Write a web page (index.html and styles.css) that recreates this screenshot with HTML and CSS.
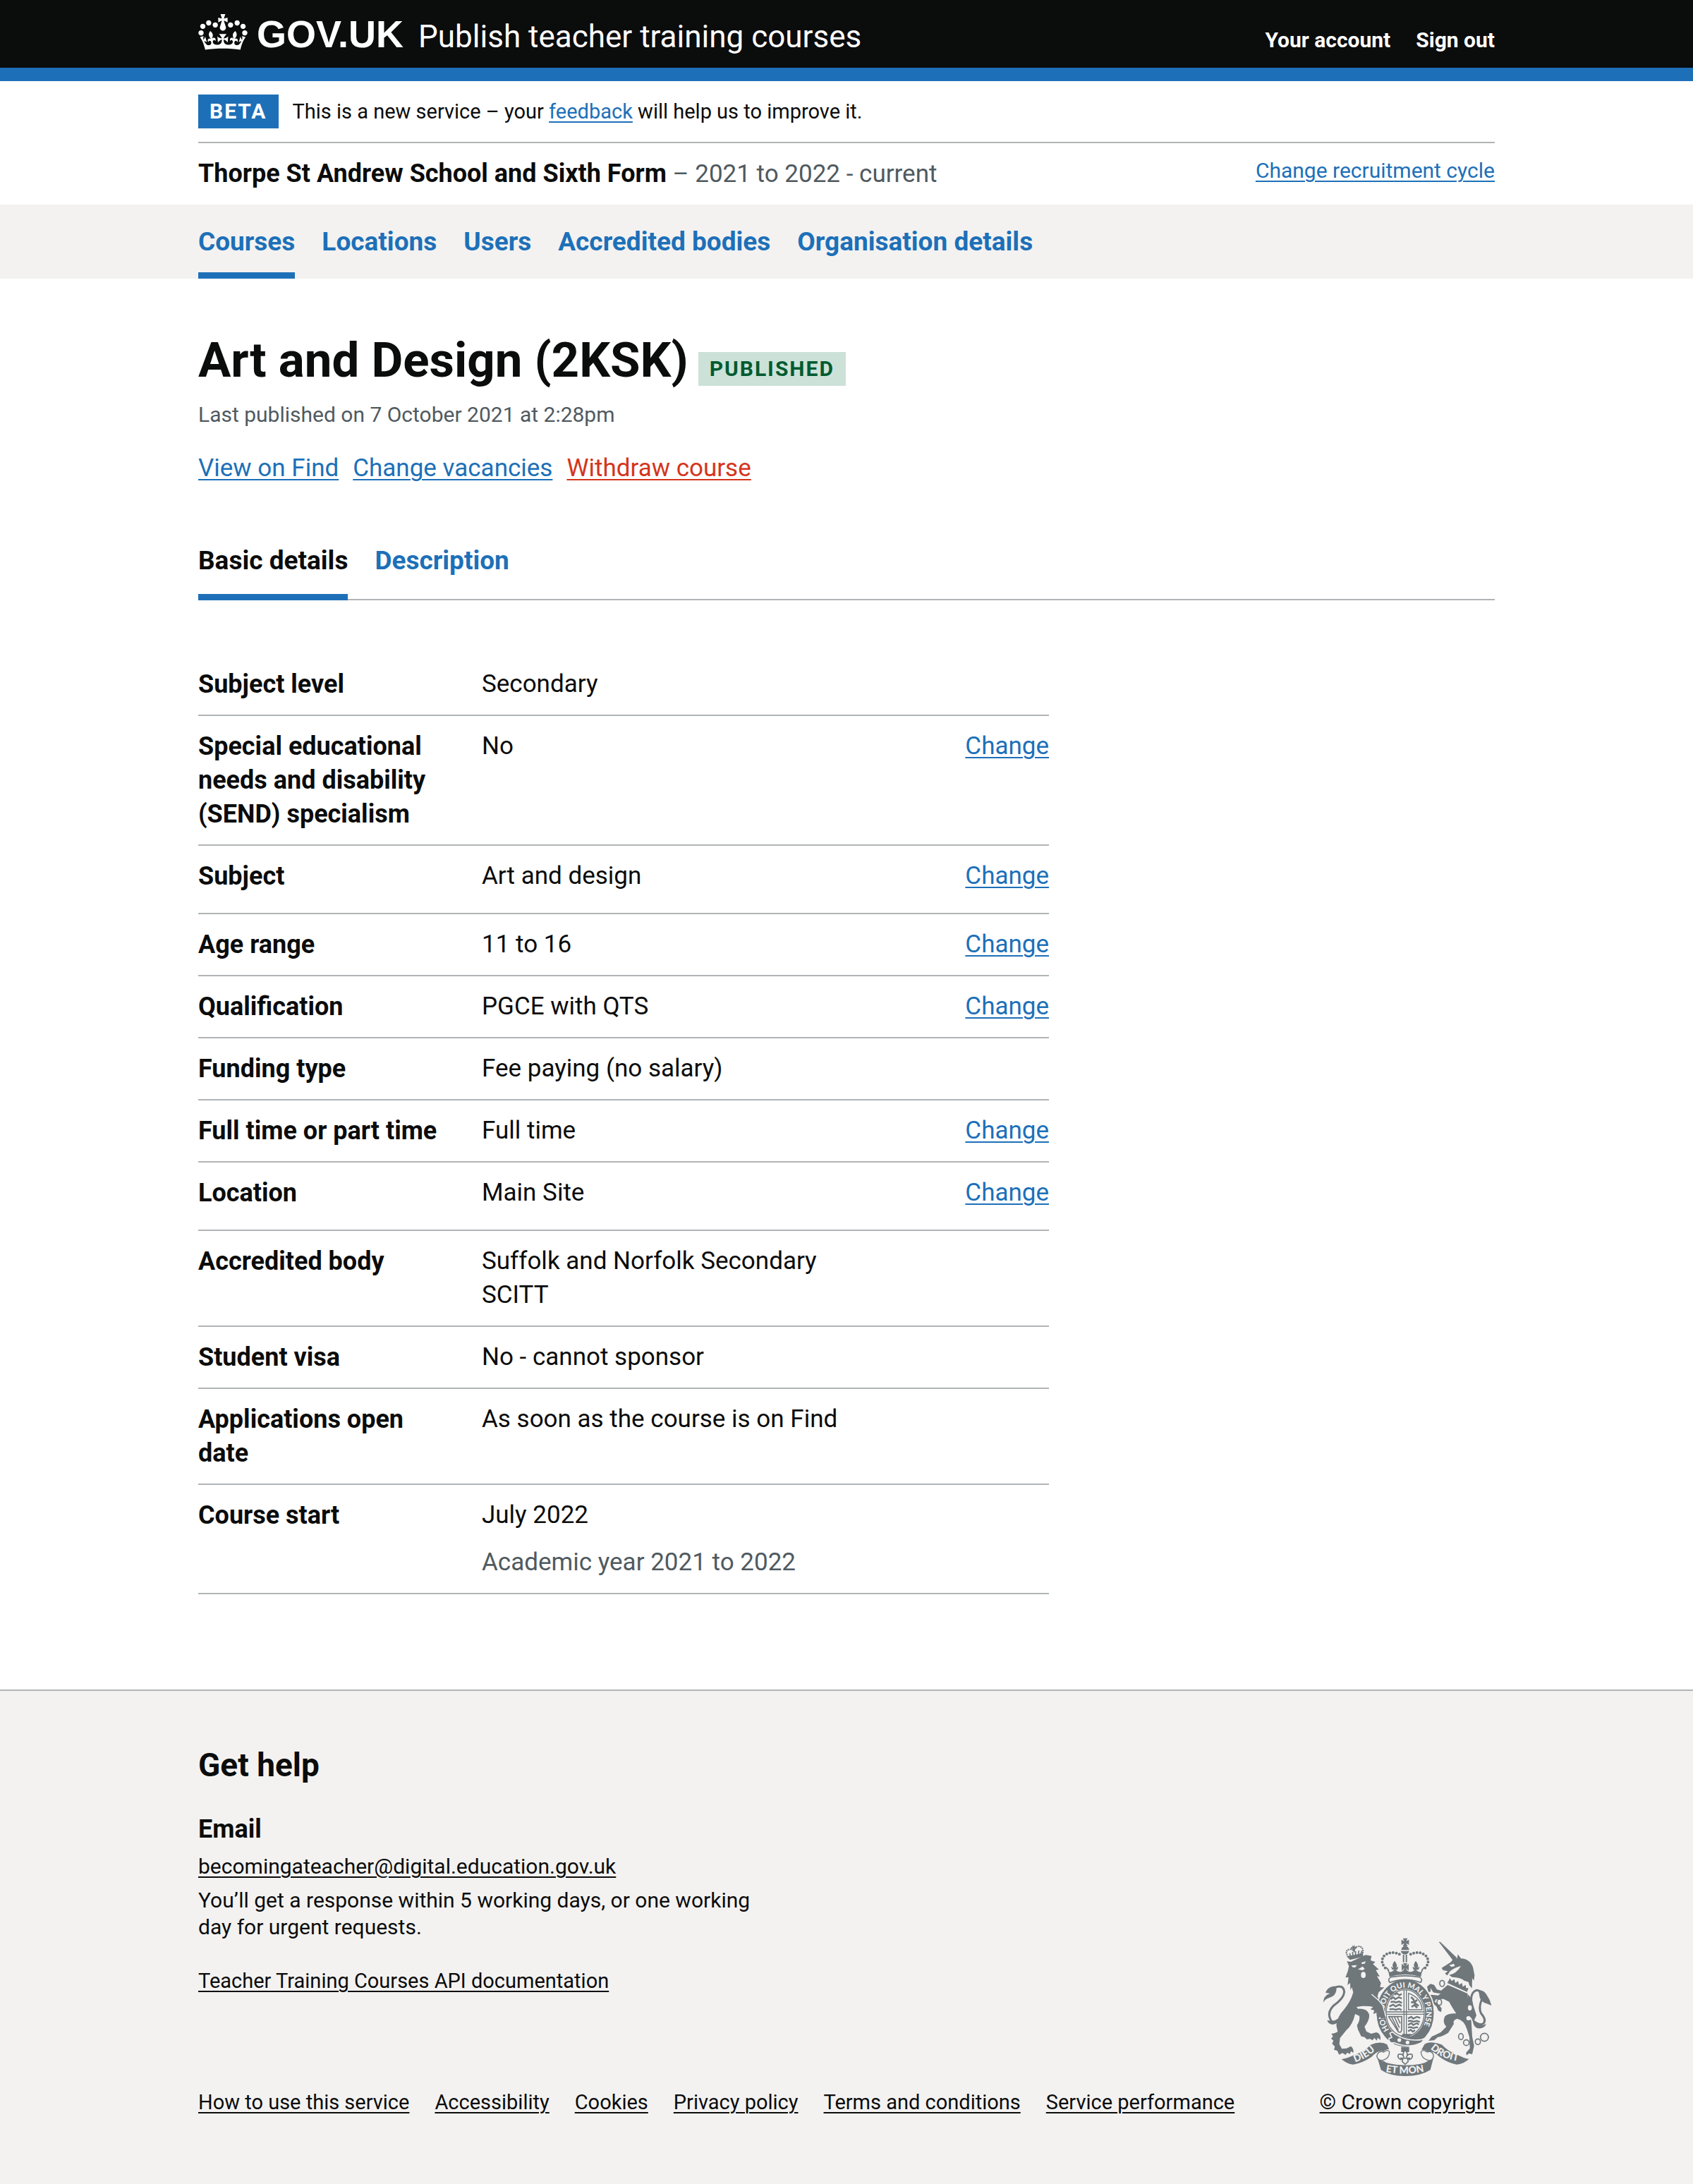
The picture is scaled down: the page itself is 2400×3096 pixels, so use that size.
FILE: index.html
```html
<!DOCTYPE html>
<html lang="en">
<head>
<meta charset="utf-8">
<meta name="viewport" content="width=device-width, initial-scale=1">
<title>Art and Design (2KSK) - Publish teacher training courses - GOV.UK</title>
<link rel="stylesheet" href="styles.css">
</head>
<body>
<header class="header">
  <div class="container header-inner">
    <a class="logo" href="#">
      <svg class="logo-crown" viewBox="0 0 132 97" aria-hidden="true"><path fill="currentColor" d="M25 30.2c3.5 1.5 7.7-.2 9.1-3.7 1.5-3.6-.2-7.8-3.9-9.2-3.6-1.4-7.6.3-9.1 3.9-1.4 3.5.3 7.5 3.9 9zM9 39.5c3.6 1.5 7.8-.2 9.2-3.7 1.5-3.6-.2-7.8-3.9-9.1-3.6-1.5-7.6.2-9.1 3.8-1.4 3.5.3 7.5 3.8 9zM4.4 57.2c3.5 1.5 7.7-.2 9.1-3.8 1.5-3.6-.2-7.7-3.9-9.1-3.5-1.5-7.6.3-9.1 3.8-1.4 3.5.3 7.6 3.9 9.1zm38.3-21.4c3.5 1.5 7.7-.2 9.1-3.8 1.5-3.6-.2-7.7-3.9-9.1-3.6-1.5-7.6.3-9.1 3.8-1.3 3.6.4 7.7 3.9 9.1zm64.4-5.6c-3.6 1.5-7.8-.2-9.1-3.7-1.5-3.6.2-7.8 3.8-9.2 3.6-1.4 7.7.3 9.2 3.9 1.3 3.5-.4 7.5-3.9 9zm15.9 9.3c-3.6 1.5-7.7-.2-9.1-3.7-1.5-3.6.2-7.8 3.7-9.1 3.6-1.5 7.7.2 9.2 3.8 1.5 3.5-.3 7.5-3.8 9zm4.7 17.7c-3.6 1.5-7.8-.2-9.2-3.8-1.5-3.6.2-7.7 3.9-9.1 3.6-1.5 7.7.3 9.2 3.8 1.3 3.5-.4 7.6-3.9 9.1zM89.3 35.8c-3.6 1.5-7.8-.2-9.2-3.8-1.4-3.6.2-7.7 3.9-9.1 3.6-1.5 7.7.3 9.2 3.8 1.4 3.6-.3 7.7-3.9 9.1zM69.7 17.7l8.9 4.7V9.3l-8.9 2.8c-.2-.3-.5-.6-.9-.9L72.4 0H59.6l3.5 11.2c-.3.3-.6.5-.9.9l-8.8-2.8v13.1l8.8-4.7c.3.3.6.7.9.9l-5 15.4v.1c-.2.8-.4 1.6-.4 2.4 0 4.1 3.1 7.5 7 8.1h.2c.3 0 .7.1 1 .1.4 0 .7 0 1-.1h.2c4-.6 7.1-4.1 7.1-8.1 0-.8-.1-1.7-.4-2.4V34l-5.1-15.4c.4-.2.7-.6 1-.9zM66 92.8c16.9 0 32.8 1.1 47.1 3.2 4-16.9 8.9-26.7 14-33.5l-9.6-3.4c1 4.9 1.1 7.2 0 10.2-1.5-1.4-3-4.3-4.2-8.7L108.6 76c2.8-2 5-3.2 7.5-3.3-4.4 9.4-10 11.9-13.6 11.2-4.3-.8-6.3-4.6-5.6-7.9 1-4.7 5.7-5.9 8-.5 4.3-8.7-3-11.4-7.6-8.8 7.1-7.2 7.9-13.5 2.1-21.1-8 6.1-8.1 12.3-4.5 20.8-4.7-5.4-12.1-2.5-9.5 6.2 3.4-5.2 7.9-2 7.2 3.1-.6 4.3-6.4 7.8-13.5 7.2-10.3-.9-10.9-8-11.2-13.8 2.5-.5 7.1 1.8 11 7.3L80.2 60c-4.1 4.4-8 5.3-12.3 5.4 1.4-4.4 8-11.6 8-11.6H55.5s6.4 7.2 7.9 11.6c-4.2-.1-8-1-12.3-5.4l1.4 16.4c3.9-5.5 8.5-7.7 10.9-7.3-.3 5.8-.9 12.8-11.1 13.8-7.2.6-12.9-2.9-13.5-7.2-.7-5 3.8-8.3 7.1-3.1 2.7-8.7-4.6-11.6-9.4-6.2 3.7-8.5 3.6-14.7-4.6-20.8-5.8 7.6-5 13.9 2.2 21.1-4.7-2.6-11.9.1-7.7 8.8 2.3-5.5 7.1-4.2 8.1.5.7 3.3-1.3 7.1-5.7 7.9-3.5.7-9-1.8-13.5-11.2 2.5.1 4.7 1.3 7.5 3.3l-4.7-15.4c-1.2 4.4-2.7 7.2-4.3 8.7-1.1-3-.9-5.3 0-10.2l-9.5 3.4c5 6.9 9.9 16.7 14 33.5 14.8-2.1 30.8-3.2 47.7-3.2z"/></svg>
      <span class="logo-text">GOV.UK</span>
    </a>
    <a class="service-name" href="#">Publish teacher training courses</a>
    <nav class="account-nav" aria-label="Account">
      <a href="#">Your account</a>
      <a href="#">Sign out</a>
    </nav>
  </div>
</header>

<div class="container">
  <div class="phase-banner">
    <strong class="tag">BETA</strong>
    <p class="phase-text">This is a new service – your <a href="#">feedback</a> will help us to improve it.</p>
  </div>
  <div class="organisation">
    <p class="organisation-name"><strong>Thorpe St Andrew School and Sixth Form</strong> <span class="secondary">– 2021 to 2022 - current</span></p>
    <a class="cycle-link" href="#">Change recruitment cycle</a>
  </div>
</div>

<nav class="primary-nav" aria-label="Primary">
  <ul class="container nav-list">
    <li><a href="#" aria-current="page">Courses</a></li>
    <li><a href="#">Locations</a></li>
    <li><a href="#">Users</a></li>
    <li><a href="#">Accredited bodies</a></li>
    <li><a href="#">Organisation details</a></li>
  </ul>
</nav>

<main class="container main">
  <div class="title-row">
    <h1>Art and Design (2KSK)</h1>
    <strong class="tag tag-green">PUBLISHED</strong>
  </div>
  <p class="published-date">Last published on 7 October 2021 at 2:28pm</p>
  <div class="course-actions">
    <a href="#">View on Find</a>
    <a href="#">Change vacancies</a>
    <a class="danger-link" href="#">Withdraw course</a>
  </div>
  <nav aria-label="Course">
    <ul class="nav-list tabs">
      <li><a href="#" aria-current="page">Basic details</a></li>
      <li><a href="#">Description</a></li>
    </ul>
  </nav>

  <dl class="summary">
    <div class="row"><dt>Subject level</dt><dd>Secondary</dd></div>
    <div class="row"><dt>Special educational needs and disability (SEND) specialism</dt><dd>No</dd><dd class="action"><a href="#">Change</a></dd></div>
    <div class="row row-list"><dt>Subject</dt><dd>Art and design</dd><dd class="action"><a href="#">Change</a></dd></div>
    <div class="row"><dt>Age range</dt><dd>11 to 16</dd><dd class="action"><a href="#">Change</a></dd></div>
    <div class="row"><dt>Qualification</dt><dd>PGCE with QTS</dd><dd class="action"><a href="#">Change</a></dd></div>
    <div class="row"><dt>Funding type</dt><dd>Fee paying (no salary)</dd></div>
    <div class="row"><dt>Full time or part time</dt><dd>Full time</dd><dd class="action"><a href="#">Change</a></dd></div>
    <div class="row row-list"><dt>Location</dt><dd>Main Site</dd><dd class="action"><a href="#">Change</a></dd></div>
    <div class="row"><dt>Accredited body</dt><dd>Suffolk and Norfolk Secondary SCITT</dd></div>
    <div class="row"><dt>Student visa</dt><dd>No - cannot sponsor</dd></div>
    <div class="row"><dt>Applications open date</dt><dd>As soon as the course is on Find</dd></div>
    <div class="row"><dt>Course start</dt><dd>July 2022<p class="hint">Academic year 2021 to 2022</p></dd></div>
  </dl>
</main>

<footer class="footer">
  <div class="container">
    <div class="help">
      <h2>Get help</h2>
      <h3>Email</h3>
      <p class="help-email"><a href="#">becomingateacher@digital.education.gov.uk</a></p>
      <p class="help-text">You’ll get a response within 5 working days, or one working day for urgent requests.</p>
      <p class="help-docs"><a href="#">Teacher Training Courses API documentation</a></p>
    </div>
    <div class="footer-meta">
      <ul class="footer-links">
        <li><a href="#">How to use this service</a></li>
        <li><a href="#">Accessibility</a></li>
        <li><a href="#">Cookies</a></li>
        <li><a href="#">Privacy policy</a></li>
        <li><a href="#">Terms and conditions</a></li>
        <li><a href="#">Service performance</a></li>
      </ul>
      <a class="copyright" href="#">
        <svg class="crest" viewBox="102 80 720 591" aria-hidden="true">
          <defs>
            <path id="garter" d="M385 471A90 108 0 1 1 515 478"/>
            <path id="ribbon-left" d="M240 609Q294 592 338 548"/>
            <path id="ribbon-mid" d="M370 650Q453 666 540 648"/>
            <path id="ribbon-right" d="M560 551Q606 596 690 606"/>
          </defs>
          <!-- lion -->
          <g class="ink">
            <path d="M205 180L222 182 285 153 310 157 306 176 326 183 316 192 341 215 328 217 345 245 333 243 350 272 346 290 364 291 340 312 335 330 350 350 362 395 366 420 350 422 342 410 332 413 332 398 318 403 322 388 306 384 318 374 302 371 272 370 246 374 252 382Q290 380 299 403Q305 425 280 458L288 478 308 488 330 482Q350 486 348 514L336 505 332 517 322 506 314 516 304 510 290 512 280 502 266 499 252 470 248 452Q262 430 258 412L240 404Q230 450 202 474L176 506 173 532 184 552 204 550 222 541Q236 552 232 569L222 562 218 574 206 568 200 578 186 570 172 577 164 560 150 556 154 543 142 530 148 518 138 508 146 499 139 488 152 486 166 480 160 452Q166 412 192 386Q222 350 232 312L226 290 220 303 219 272 208 281 212 248 199 249 209 222 214 200Z"/>
            <path d="M104 356Q106 325 133 317L114 313Q122 290 148 286Q164 284 160 304Q156 328 132 334Q112 340 104 356Z"/>
            <path class="line" stroke-width="9" d="M152 292Q190 276 194 310Q192 338 150 367Q116 400 140 435Q150 442 174 424"/>
            <path d="M121 430L139 434Q160 440 181 414L182 424Q166 447 143 449Q126 446 121 430Z"/>
            <path d="M204 159L273 145 275 160 218 174Z"/>
            <path class="line" stroke-width="7" stroke-linecap="round" stroke-dasharray="0 9" d="M211 160Q194 138 212 130Q228 125 237 140Q236 120 254 116Q278 118 272 146"/>
            <path d="M227 111l5 6 5-7 2 9 8-3-2 9-7-2 1 12-8 1-2-11-7 4 0-9 7 0z"/>
            <path class="line" stroke-width="5" d="M220 158l-3-12M231 157l-2-17M242 154l0-17M254 151l2-17M264 149l5-14"/>
          </g>
          <g class="paper">
            <path d="M224 198L248 196 240 206 230 205ZM266 186L286 180 280 190 270 192ZM252 214L272 202 281 212 272 218Z"/>
            <ellipse cx="275" cy="238" rx="10" ry="13"/>
          </g>
          <!-- unicorn -->
          <g class="ink">
            <path d="M596 97L602 97 674 166 656 176Z"/>
            <path d="M674 168L677 150 690 168Q730 170 742 208L748 240 745 262 738 252 737 295 726 282 722 268 704 262Q690 248 652 247L640 238Q672 232 690 200Q664 206 644 222L632 240 622 232 634 222 614 218 608 208 646 184 656 172Z"/>
            <path d="M634 280L718 316Q716 350 744 386Q760 412 735 420L722 418 734 432 738 500 746 540 738 575 724 572 714 580 712 568 728 550 726 502 716 470Q704 430 674 424Q654 430 660 446L636 484Q610 500 592 502L576 516 552 518 566 500 604 482 628 458Q610 440 622 414Q636 400 670 402Q650 372 640 352L616 340 584 342 578 352 592 360 608 380 606 396 594 390 586 372 570 358 556 330 562 322 592 325 604 318 572 312 560 292 562 308 552 312 546 288 560 276 576 280 588 300 606 304Z"/>
            <path d="M718 320Q736 330 744 372L756 410 742 440 722 390Z"/>
            <path class="line" stroke-width="9" d="M738 374Q724 314 756 303Q788 306 778 344Q764 378 776 402Q800 430 786 444Q770 456 744 434"/>
            <path d="M762 302Q788 302 798 320L812 344 820 368 800 360Q776 352 770 334Q768 314 762 302Z"/>
            <path d="M740 430Q770 462 798 446Q788 470 758 464Q742 456 740 430Z"/>
          </g>
          <g class="paper">
            <path d="M640 196L660 190 664 200 650 204Z"/>
            <circle cx="722" cy="422" r="9"/><circle cx="698" cy="456" r="8"/>
          </g>
          <g class="paper line" stroke-width="5">
            <ellipse cx="610" cy="274" rx="10" ry="13"/><ellipse cx="598" cy="354" rx="10" ry="13"/><ellipse cx="728" cy="378" rx="11" ry="14"/><ellipse cx="690" cy="500" rx="10" ry="13"/><circle cx="713" cy="526" r="12"/><ellipse cx="762" cy="522" rx="11" ry="12"/><circle cx="790" cy="503" r="17"/>
          </g>
          <path class="ink" d="M632 272L644 252 650 264 662 256 666 272 678 264 682 280 694 272 698 288 710 280 712 294 722 294 716 310Z"/>
          <path class="line cut" stroke-width="4" d="M632 276L716 314"/>
          <!-- garter and shield -->
          <g class="ink">
            <ellipse class="edge" cx="453" cy="400" rx="124" ry="145"/>
          </g>
          <ellipse class="paper" cx="453" cy="400" rx="85" ry="103"/>
          <ellipse class="line" stroke-width="4" cx="453" cy="400" rx="81" ry="99"/>
          <text class="crest-text garter-text"><textPath href="#garter">HONI SOIT QUI MAL Y PENSE</textPath></text>
          <g class="line" stroke-width="4">
            <path d="M448 302V497M458 302V497M373 395H533M373 405H533"/>
            <path stroke-width="7" d="M391 341l12-8 8 8 14-8 14 5M391 353l14-2 8 4 14-4 12 6M386 372l16-8 10 8 16-8 10 6M386 384l16-1 10 3 16-4 10 5M408 322l10-6 10 8 10-5"/>
            <path stroke-width="7" d="M465 423l14-7 8 8 16-8 14 5M465 434l14-1 8 4 16-4 12 5M465 450l14-7 8 8 16-8 8 6M465 461l14-1 8 4 16-4 4 3M465 477l12-6 8 8 10-6"/>
            <path d="M467 316V386H525Q522 336 467 316Z"/>
            <path stroke-width="8" d="M478 332l10 10 6 16 16 12M478 354l14 0 12-10M480 374l12-8 12 12"/>
            <path stroke-width="5" d="M383 415H438V470Q436 486 424 480L383 416ZM395 416L424 474M407 416L428 462M419 416L432 444"/>
          </g>
          <path class="ink edge" d="M388 486Q400 476 410 490Q456 520 518 514L536 508 522 526Q470 552 406 526Q382 530 384 508L396 504Z"/>
          <g class="paper"><circle cx="428" cy="515" r="8"/><circle cx="463" cy="525" r="8"/></g>
          <path class="line" stroke-width="7" d="M440 492H480M436 499H474"/>
          <!-- lion's forepaw over the garter -->
          <path class="ink" d="M306 318L342 350 356 368 366 398 368 420 350 424 342 410 332 413 332 398 318 403 322 388 306 384 318 374 300 368Z"/>
          <path class="line cut" stroke-width="4" d="M310 320L342 348 358 368 370 414"/>
          <!-- crown -->
          <g class="ink">
            <path class="line paper" stroke-width="5" d="M392 247Q453 236 514 247Q530 258 518 270Q453 246 388 270Q376 258 392 247Z"/>
            <path d="M368 203Q385 208 386 226Q400 226 410 212Q420 228 438 224L453 212 468 224Q486 228 496 212Q506 226 520 226Q522 208 538 203Q522 222 520 246Q453 226 386 246Q384 222 368 203Z"/>
            <path d="M408 178Q424 198 414 208L424 202 420 216H398L392 202 402 208Q394 194 408 178ZM498 178Q514 198 504 208L514 202 510 216H488L484 202 494 208Q484 194 498 178Z"/>
            <path d="M438 190L450 200 444 188H462L456 200 468 190V220L456 208 462 222H444L450 208 438 220Z"/>
            <path d="M443 82H463L457 94 469 88V110L457 103 463 116H443L449 103 437 110V88L449 94Z"/>
            <path d="M436 132Q438 116 453 116Q468 116 470 132ZM434 136H470Q466 150 453 151Q438 150 434 136Z"/>
            <path class="line" stroke-width="6" d="M446 152V184M458 152V184"/>
            <path class="line" stroke-width="12" stroke-linecap="round" stroke-dasharray="0 14" d="M368 208Q344 180 364 156Q394 132 434 152M538 208Q562 180 540 156Q512 132 472 152"/>
          </g>
          <!-- pendant -->
          <g class="ink">
            <path d="M436 544H470V566H436Z"/>
            <path class="line paper" stroke-width="5" d="M453 558Q438 572 448 588Q442 570 424 576Q418 590 434 598L444 592 440 606 453 618 466 606 462 592 472 598Q488 590 482 576Q464 570 458 588Q468 572 453 558ZM432 592H474"/>
          </g>
          <!-- motto ribbon -->
          <g class="ink">
            <path class="edge" d="M176 594Q206 592 234 576Q276 564 306 532Q350 514 378 532L388 556Q372 556 362 566Q340 556 310 590Q270 616 232 622Q204 620 176 594Z"/>
            <path class="edge" d="M730 593Q706 592 676 574Q640 564 610 532Q560 514 534 530L518 558Q534 556 546 566Q566 558 600 590Q632 614 672 622Q706 618 730 593Z"/>
            <path class="paper line" stroke-width="4" d="M362 566Q338 558 332 584Q340 606 360 600Q386 592 386 566Q382 552 362 566ZM546 566Q570 558 574 584Q568 606 548 600Q522 592 520 566Q526 552 546 566Z"/>
            <path d="M334 588Q346 606 362 604Q376 618 453 622Q530 620 548 604Q562 604 574 588L560 642Q520 668 453 668Q386 668 350 642Z"/>
          </g>
          <text class="crest-text motto-text"><textPath href="#ribbon-left">DIEU</textPath></text>
          <text class="crest-text motto-text"><textPath href="#ribbon-mid">ET MON</textPath></text>
          <text class="crest-text motto-text"><textPath href="#ribbon-right">DROIT</textPath></text>
        </svg>
        <span>© Crown copyright</span>
      </a>
    </div>
  </div>
</footer>
</body>
</html>
```
FILE: styles.css
```css
:root {
  --ink: #0b0c0c;
  --blue: #1d70b8;
  --grey: #505a5f;
  --border: #b1b4b6;
  --light: #f3f2f1;
  --crest: #6f777b;
}

* { box-sizing: border-box; }

body {
  margin: 0;
  min-height: 100vh;
  display: flex;
  flex-direction: column;
  background: #fff;
  color: var(--ink);
  font-family: Roboto, "Liberation Sans", sans-serif;
  font-size: 35px;
  line-height: 48px;
}

h1, h2, h3, p, ul, dl, dd { margin: 0; }
ul { padding: 0; list-style: none; }

a {
  color: var(--blue);
  text-decoration-thickness: 2px;
  text-underline-offset: 4px;
}

.container {
  width: 100%;
  max-width: 1838px;
  margin: 0 auto;
}

.secondary { color: var(--grey); }

/* Header */
.header {
  background: var(--ink);
  border-bottom: 19px solid var(--blue);
}
.header-inner {
  display: flex;
  align-items: baseline;
  height: 96px;
  padding-top: 18px;
}
.header a { color: #fff; text-decoration: none; }
.logo {
  display: flex;
  align-items: baseline;
  gap: 13px;
  margin-right: 21px;
  line-height: 60px;
}
.logo-crown { width: 70px; height: 51px; align-self: flex-start; margin-top: 2px; }
.logo-text {
  font-family: "Liberation Sans", sans-serif;
  font-size: 54px;
  font-weight: 700;
}
.service-name { font-size: 44px; }
.account-nav {
  display: flex;
  gap: 36px;
  margin-left: auto;
  font-size: 30px;
  font-weight: 700;
}

/* Phase banner and organisation */
.phase-banner {
  display: flex;
  align-items: center;
  gap: 20px;
  padding: 19px 0;
  border-bottom: 2px solid var(--border);
}
.phase-text { font-size: 29px; line-height: 38px; }
.tag {
  padding: 5px 16px;
  background: var(--blue);
  color: #fff;
  font-size: 30px;
  line-height: 38px;
  letter-spacing: 2px;
}
.tag-green { background: #cce2d8; color: #005a30; }
.organisation {
  display: flex;
  justify-content: space-between;
  padding: 19px 0;
}
.organisation-name strong { font-size: 36px; }
.cycle-link { font-size: 30px; line-height: 40px; }

/* Navigation */
.primary-nav { background: var(--light); }
.nav-list { display: flex; gap: 38px; font-size: 37px; font-weight: 700; }
.nav-list a {
  display: block;
  padding: 29px 0 28px;
  text-decoration: none;
}
.nav-list a[aria-current] { box-shadow: inset 0 -9px var(--blue); }

/* Course heading */
.main { padding-top: 76px; }
.title-row { display: flex; gap: 14px; align-items: flex-end; }
h1 { font-size: 69px; line-height: 80px; }
.title-row .tag { margin-bottom: 4px; }
.published-date { margin-top: 18px; color: var(--grey); font-size: 30px; line-height: 38px; }
.course-actions { display: flex; gap: 20px; margin-top: 33px; }
.danger-link { color: #d4351c; }
.tabs { margin-top: 55px; box-shadow: inset 0 -2px var(--border); }
.tabs a { padding: 28px 0 32px; }
.tabs a[aria-current] { color: var(--ink); }

/* Summary list */
.summary { width: 1206px; max-width: 100%; margin-top: 76px; }
.row {
  display: grid;
  grid-template-columns: 2fr 3fr 1fr;
  padding: 19px 0;
  border-bottom: 2px solid var(--border);
}
.row-list { padding-bottom: 28px; }
dt { padding-right: 38px; font-size: 36px; font-weight: 700; }
dd { padding-right: 38px; }
.action { padding-right: 0; text-align: right; }
.hint { margin-top: 19px; color: var(--grey); }

/* Footer */
.footer {
  flex-grow: 1;
  margin-top: 135px;
  padding: 76px 0 84px;
  background: var(--light);
  border-top: 2px solid var(--border);
  font-size: 30px;
  line-height: 38px;
}
.footer a { color: var(--ink); }
.help { max-width: 800px; }
h2 { font-size: 46px; line-height: 58px; }
h3 { margin-top: 38px; font-size: 36px; line-height: 48px; }
.help-email { margin-top: 10px; }
.help-text { margin: 10px 0 38px; }
.help-docs, .footer-links { font-size: 29px; }
.footer-meta { display: flex; justify-content: space-between; align-items: flex-end; }
.footer-links { display: flex; flex-wrap: wrap; gap: 0 36px; }
.copyright { display: flex; flex-direction: column; align-items: center; }
.crest { width: 240px; height: 197px; margin: -80px 0 17px; }

.ink { fill: var(--crest); }
.paper { fill: var(--light); }
.line { fill: none; stroke: var(--crest); }
.paper.line { fill: var(--light); }
.line.cut { stroke: var(--light); }
.edge { stroke: var(--light); stroke-width: 5px; }
.crest-text { fill: var(--light); font-family: Lato, sans-serif; font-weight: 900; }
.garter-text { font-size: 32px; }
.motto-text { font-size: 42px; }
```
